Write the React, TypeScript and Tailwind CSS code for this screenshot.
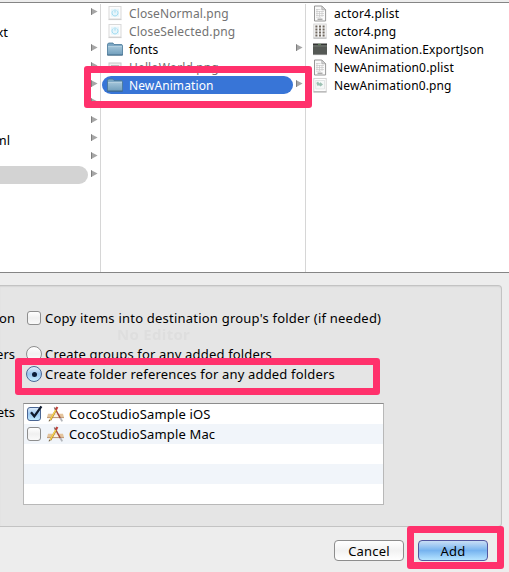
import React from "react";

function Arrow() {
  return (
    <svg className="block h-[8px] w-[7px] -translate-y-[1.5px]" viewBox="0 0 7 8">
      <path d="M0.3 0.8L6.6 4L0.3 7.4Z" fill="#a6a6a6" />
      <path d="M0.5 0.8V7.4" stroke="#777" strokeWidth="0.9" />
    </svg>
  );
}

function FolderIcon() {
  return (
    <svg className="block h-[16px] w-[16px]" viewBox="0 0 16 16">
      <path d="M0.5 14V3.2L1.5 2H6L7 3.5H14.8L15.5 4.4V14Z" fill="#79a5c2" stroke="#477798" strokeWidth="0.8" />
      <path d="M1 5.2H15V13.5H1Z" fill="url(#fold)" />
      <path d="M1 5.4H15" stroke="#c4dbe8" strokeWidth="0.7" />
      <path d="M0.3 14.1H15.7" stroke="#375f7b" strokeWidth="0.8" />
      <defs>
        <linearGradient id="fold" x1="0" y1="0" x2="0" y2="1">
          <stop offset="0" stopColor="#a3c5d9" />
          <stop offset="1" stopColor="#73a0bd" />
        </linearGradient>
      </defs>
    </svg>
  );
}

function PowerImage() {
  return (
    <svg className="block h-[16px] w-[16px]" viewBox="0 0 16 16">
      <rect x="2" y="1.5" width="12" height="12.5" fill="#fcfcfc" stroke="#d9d9d9" />
      <path d="M1.5 14.6H14.5" stroke="#c4c4c4" strokeWidth="0.8" />
      <rect x="4" y="3.7" width="8" height="8" fill="#e6f5fb" />
      <path d="M6.3 5.5A3 3 0 1 0 9.7 5.5M8 4.4V7.6" fill="none" stroke="#97d8ee" strokeWidth="0.9" />
    </svg>
  );
}

function PlainImage() {
  return (
    <svg className="block h-[16px] w-[16px]" viewBox="0 0 16 16">
      <rect x="2" y="4" width="12" height="9" fill="#eee" stroke="#c8c8c8" />
      <rect x="4" y="6" width="8" height="5" fill="#bbb" />
    </svg>
  );
}

function DocIcon() {
  return (
    <svg className="block h-[17px] w-[16px]" viewBox="0 0 16 17">
      <path d="M2.5 1H9.8L13.6 4.8V16H2.5Z" fill="#fafafa" stroke="#8b8b8b" strokeWidth="0.9" />
      <path d="M9.8 1V4.8H13.6Z" fill="#d5d5d5" stroke="#999" strokeWidth="0.6" />
      <path d="M4 4.5H8.5M4 6.5H12M4 8.5H12M4 10.5H12M4 12.2H9M5 4V11M7.5 6V12M10 6V12" stroke="#c2c2c2" strokeWidth="0.6" />
      <path d="M5.5 14.2H10.5" stroke="#888" strokeWidth="1" />
    </svg>
  );
}

function SpriteIcon() {
  return (
    <svg className="block h-[16px] w-[16px]" viewBox="0 0 16 16">
      <rect x="1.8" y="1" width="12.4" height="14" fill="#f5f5f5" stroke="#d0d0d0" strokeWidth="0.8" />
      <path d="M1.5 15.2H14.5" stroke="#aaa" strokeWidth="0.8" />
      <path d="M4.4 2.5V13.8M8 2.5V13.8M11.6 2.5V13.8" stroke="#70685f" strokeWidth="2" strokeDasharray="2.1 0.9" />
    </svg>
  );
}

function ConsoleIcon() {
  return (
    <svg className="block h-[16px] w-[16px]" viewBox="0 0 16 16">
      <rect x="1" y="2.7" width="14" height="11" fill="#555955" />
      <path d="M1 3.2H15" stroke="#282828" />
      <path d="M1 5H15" stroke="#858985" strokeWidth="0.7" />
      <path d="M6 3.5H9" stroke="#6b9d65" strokeWidth="0.7" />
      <path d="M1 13.6H15" stroke="#8b8b8b" strokeWidth="0.7" />
    </svg>
  );
}

function PieceIcon() {
  return (
    <svg className="block h-[16px] w-[16px]" viewBox="0 0 16 16">
      <rect x="1.8" y="1.4" width="12.4" height="13" fill="#fff" stroke="#cfcfcf" strokeWidth="0.9" />
      <path d="M1.4 15H14.6" stroke="#9c9c9c" strokeWidth="0.9" />
      <rect x="3.8" y="3.4" width="8.6" height="8.6" fill="#f5f8f8" stroke="#d2d8d8" strokeWidth="0.6" />
      <path d="M4.3 6L6 4.6L7.3 6.4L8.4 5.2L11 7.5L8.5 9.6L7 8.2L5.6 9Z" fill="#9bc0b2" />
    </svg>
  );
}

function AppIcon() {
  return (
    <svg className="block h-[17px] w-[17px]" viewBox="0 0 17 17">
      <path d="M1 7.8H16L17 11.6H0Z" fill="#e3c39c" />
      <path d="M5.8 8.2H11.2L12.6 11H4.6Z" fill="#fbf3e6" />
      <path d="M0 11.6H17" stroke="#b98e68" strokeWidth="0.9" />
      <path d="M7.7 1.8L13.3 12.2" stroke="#a2463a" strokeWidth="1.4" />
      <path d="M7.2 1.4L8.5 3.6" stroke="#8a8a8a" strokeWidth="1.1" />
      <path d="M13.4 12L15.2 15.4" stroke="#b3b6bb" strokeWidth="1.8" />
      <path d="M9.3 3.6L3.4 14" stroke="#ab7e34" strokeWidth="1.9" />
      <path d="M8.7 4.1L3 13.8" stroke="#f7d450" strokeWidth="1.3" />
      <path d="M10.4 1L9 3.8" stroke="#bd3f38" strokeWidth="2" />
      <path d="M2 13.4L1.7 15.8L3.8 14.5Z" fill="#7a684d" />
    </svg>
  );
}

function Checkbox({ checked = false }: { checked?: boolean }) {
  return (
    <div
      className={
        checked
          ? "relative h-[14px] w-[14px] shrink-0 rounded-[3px] border border-[#4a6593] bg-linear-to-b from-[#dcecfb] via-[#9dc8f2] to-[#c2ebff]"
          : "relative h-[14px] w-[14px] shrink-0 rounded-[3px] border border-[#8e8e8e] bg-linear-to-b from-white via-[#f0f0f0] to-[#fafafa]"
      }
    >
      {checked && (
        <svg className="absolute -top-[4px] left-0 h-[16px] w-[16px]" viewBox="0 0 16 16">
          <path d="M3 8.2L6.3 12.3L13.4 2.3" fill="none" stroke="#0e1a2d" strokeWidth="2.3" />
        </svg>
      )}
    </div>
  );
}

function Radio({ checked = false }: { checked?: boolean }) {
  return (
    <div
      className={
        checked
          ? "flex h-[16px] w-[16px] shrink-0 items-center justify-center rounded-full border border-[#4b6796] bg-linear-to-b from-[#e3effb] via-[#9cc6ef] to-[#c8efff]"
          : "flex h-[16px] w-[16px] shrink-0 items-center justify-center rounded-full border border-[#8e8e8e] bg-linear-to-b from-white via-[#f1f1f1] to-white"
      }
    >
      {checked && <div className="h-[5px] w-[5px] rounded-full bg-[#0c1d39]" />}
    </div>
  );
}

const firstColumn = [
  { text: "", arrow: true },
  { text: "xt", arrow: false },
  { text: "", arrow: true },
  { text: "", arrow: true },
  { text: "", arrow: true },
  { text: "", arrow: true },
  { text: "", arrow: true },
  { text: "ml", arrow: true },
  { text: "", arrow: true },
  { text: "", arrow: true, active: true },
];

const secondColumn = [
  { icon: <PowerImage />, text: "CloseNormal.png", track: "tracking-[0.1px]", kind: "file" },
  { icon: <PowerImage />, text: "CloseSelected.png", track: "tracking-[0.18px]", kind: "file" },
  { icon: <FolderIcon />, text: "fonts", track: "tracking-[0.1px]", kind: "folder" },
  { icon: <PlainImage />, text: "HelloWorld.png", track: "tracking-[0.12px]", kind: "file" },
  { icon: <FolderIcon />, text: "NewAnimation", track: "tracking-[0.1px]", kind: "selected" },
];

const thirdColumn = [
  { icon: <DocIcon />, text: "actor4.plist", track: "tracking-[0.2px]" },
  { icon: <SpriteIcon />, text: "actor4.png", track: "tracking-[0.1px]" },
  { icon: <ConsoleIcon />, text: "NewAnimation.ExportJson", track: "tracking-[0.13px]" },
  { icon: <DocIcon />, text: "NewAnimation0.plist", track: "tracking-[0.15px]" },
  { icon: <PieceIcon />, text: "NewAnimation0.png", track: "tracking-[0.12px]" },
];

function Browser() {
  return (
    <div className="flex h-[271px] border-y border-[#858585] bg-white pt-px text-[12px] leading-[18px]">
      <div className="w-[101px] shrink-0 border-r border-[#d6d6d6]">
        {firstColumn.map((r, i) => (
          <div key={i} className="flex h-[18px] items-center">
            <div className={r.active ? "h-[18px] w-[88px] rounded-r-full bg-[#d3d3d3]" : "flex h-[18px] w-[88px] items-center"}>
              {r.text && (
                <span className="flex w-[10px] justify-end pt-[2px] text-[13px]">
                  <span className={r.text === "xt" ? "mr-[2px]" : ""}>{r.text}</span>
                </span>
              )}
            </div>
            <div className="ml-[3px]">{r.arrow && <Arrow />}</div>
          </div>
        ))}
      </div>
      <div className="w-[205px] shrink-0 border-r border-[#d6d6d6] pl-px">
        {secondColumn.map((r) => (
          <div key={r.text} className="flex h-[18px] items-center">
            <div className={r.kind === "selected" ? "flex h-[18px] w-[191px] items-center rounded-full bg-[#3875d7] pl-[5px] text-white" : r.kind === "file" ? "flex h-[18px] w-[191px] items-center pl-[5px] text-[#737373]" : "flex h-[18px] w-[191px] items-center pl-[5px]"}>
              {r.icon}
              <span className={`ml-[6px] pt-[2px] ${r.track}`}>{r.text}</span>
            </div>
            <div className="ml-[3px]">{r.kind !== "file" && <Arrow />}</div>
          </div>
        ))}
      </div>
      <div className="flex-1 pl-[6px]">
        {thirdColumn.map((r) => (
          <div key={r.text} className="flex h-[18px] items-center">
            {r.icon}
            <span className={`ml-[6px] pt-[2px] ${r.track}`}>{r.text}</span>
          </div>
        ))}
      </div>
    </div>
  );
}

function OptionLabel({ text }: { text: string }) {
  return <div className="flex w-[15px] shrink-0 justify-end whitespace-nowrap">{text}</div>;
}

export default function App() {
  return (
    <div className="relative h-[572px] w-[509px] overflow-hidden bg-[#ededed] pt-[2px] font-['Noto_Sans','Open_Sans',sans-serif] text-[13px] leading-[18px] whitespace-nowrap text-black">
      <Browser />
      <div className="mt-[12px] h-[242px] w-[502px] rounded-r-[4px] border border-l-0 border-[#c3c3c3] bg-[#e5e5e5] pt-[22px] shadow-[inset_0_1px_1px_#d6d6d6]">
        <div className="flex h-[20px] items-center">
          <OptionLabel text="on" />
          <div className="ml-[12px]"><Checkbox /></div>
          <span className="ml-[4px] tracking-[0.22px]">Copy items into destination group's folder (if needed)</span>
        </div>
        <div className="mt-[16px] flex h-[20px] items-center">
          <OptionLabel text="ers" />
          <div className="ml-[11px]"><Radio /></div>
          <span className="ml-[3px] tracking-[0.17px]">Create groups for any added folders</span>
        </div>
        <div className="flex h-[20px] items-center">
          <div className="ml-[26px]"><Radio checked /></div>
          <span className="ml-[3px] tracking-[0.17px]">Create folder references for any added folders</span>
        </div>
        <div className="mt-[19px] flex">
          <div className="h-[20px]"><OptionLabel text="ets" /></div>
          <div className="ml-[8px] h-[102px] w-[361px] border border-[#b8b8b8] border-t-[#8c8c8c] bg-white">
            <div className="flex h-[20px] items-center pl-[3px]">
              <Checkbox checked />
              <div className="ml-[6px]"><AppIcon /></div>
              <span className="ml-[5px] tracking-[0.15px]">CocoStudioSample iOS</span>
            </div>
            <div className="flex h-[20px] items-center bg-[#f1f5fa] pl-[3px]">
              <Checkbox />
              <div className="ml-[6px]"><AppIcon /></div>
              <span className="ml-[5px] tracking-[0.15px]">CocoStudioSample Mac</span>
            </div>
            <div className="h-[20px]" />
            <div className="h-[20px] bg-[#f1f5fa]" />
          </div>
        </div>
      </div>
      <div className="mt-[13px] flex gap-[14px] pl-[334px]">
        <button className="h-[21px] w-[70px] rounded-[4px] border border-[#8d8d8d] bg-linear-to-b from-white via-[#f2f2f2] to-white leading-[18px] tracking-[0.2px]">Cancel</button>
        <button className="h-[21px] w-[70px] rounded-[4px] border border-[#5156a0] bg-linear-to-b from-[#c8def5] via-[#76b3ef] to-[#b6e4ff] leading-[18px] tracking-[0.2px]">Add</button>
      </div>
      <div className="absolute top-[325px] left-[117px] text-[15px] font-bold tracking-[0.3px] text-[#dedede] blur-[0.6px]">No Editor</div>
      <div className="absolute top-[66px] left-[84px] h-[42px] w-[228px] rounded-[3px] border-[7px] border-[#ff316c]" />
      <div className="absolute top-[358px] left-[15px] h-[37px] w-[365px] rounded-[3px] border-[7px] border-[#ff316c]" />
      <div className="absolute top-[526px] left-[407px] h-[43px] w-[97px] rounded-[3px] border-[7px] border-[#ff316c]" />
    </div>
  );
}
